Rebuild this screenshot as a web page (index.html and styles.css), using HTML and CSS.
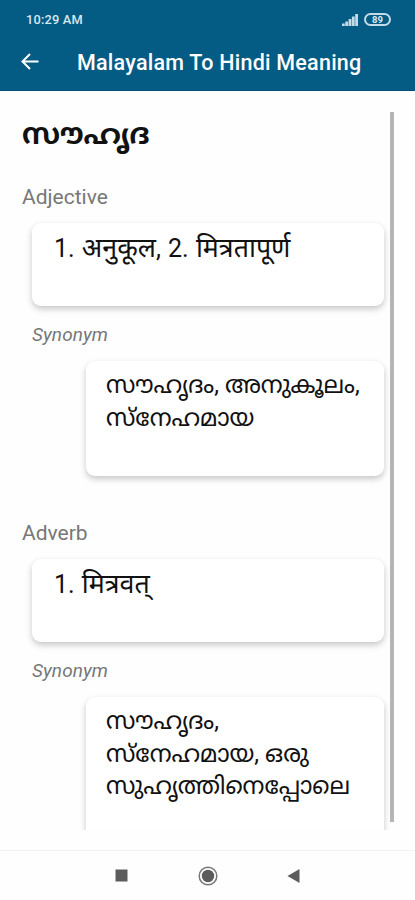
FILE: index.html
```
<!DOCTYPE html>
<html lang="ml">
<head>
  <meta charset="UTF-8">
  <meta name="viewport" content="width=device-width, initial-scale=1.0">
  <title>Malayalam To Hindi Meaning</title>
  <link rel="stylesheet" href="styles.css">
</head>
<body>

<header>
  <div class="status">
    <span class="time">10:29 AM</span>
    <svg class="signal" width="17" height="12" viewBox="0 0 17 12">
      <path d="M0 9.6h2.8V12H0zM3.3 7.4h2.8V12H3.3zM6.6 5h2.8v7H6.6zM9.9 2.6h2.8V12H9.9zM13.2 0H16v12h-2.8z"/>
    </svg>
    <span class="battery">89</span>
  </div>
  <div class="toolbar">
    <svg class="back" width="18" height="17" viewBox="0 0 18 17">
      <path d="M17.5 8.5H2M9 1L1.5 8.5 9 16"/>
    </svg>
    <h1>Malayalam To Hindi Meaning</h1>
  </div>
</header>

<main>
  <div class="content">
    <h2>സൗഹൃദ</h2>

    <section>
      <h3>Adjective</h3>
      <div class="card meaning" lang="hi">1. <span class="hi">अनुकूल</span>, 2. <span class="hi">मित्रतापूर्ण</span></div>
      <h4>Synonym</h4>
      <div class="card synonym">സൗഹൃദം, അനുകൂലം,<br>സ്&zwnj;നേഹമായ</div>
    </section>

    <section>
      <h3>Adverb</h3>
      <div class="card meaning" lang="hi">1. <span class="hi">मित्रवत्</span></div>
      <h4>Synonym</h4>
      <div class="card synonym">സൗഹൃദം,<br>സ്&zwnj;നേഹമായ, ഒരു<br>സുഹൃത്തിനെപ്പോലെ</div>
    </section>
  </div>
  <div class="scrollbar"></div>
</main>

<nav>
  <svg width="13" height="13" viewBox="0 0 13 13"><path d="M.5.5h12v12H.5z"/></svg>
  <svg width="20" height="20" viewBox="0 0 20 20">
    <circle class="ring" cx="10" cy="10" r="8.8"/>
    <circle cx="10" cy="10" r="6.2"/>
  </svg>
  <svg width="13" height="14" viewBox="0 0 13 14"><path d="M12.5 0v14L.5 7z"/></svg>
</nav>

</body>
</html>
```
FILE: styles.css
```
* {
  box-sizing: border-box;
}
body {
  margin: 0;
  height: 900px;
  overflow: hidden;
  display: flex;
  flex-direction: column;
  background-color: #fefefe;
  font-family: Roboto, "Noto Sans Malayalam", "Noto Sans", sans-serif;
  color: #111;
}
h1, h2, h3, h4 {
  margin: 0;
  white-space: nowrap;
}

header {
  height: 91px;
  background-color: #045b84;
  border-bottom: 1px solid #04507a;
  color: #fff;
}
.status {
  height: 39px;
  padding: 0 24px 0 26px;
  display: flex;
  align-items: center;
}
.time {
  flex: 1;
  font-size: 12.8px;
  font-weight: 500;
  letter-spacing: .2px;
  line-height: 14px;
  padding-top: 1px;
  color: #d8e8f0;
}
.signal {
  fill: #c3dbe6;
  margin-right: 5px;
}
.battery {
  width: 27px;
  height: 13px;
  border: 2px solid #c3dbe6;
  border-radius: 7px;
  font-size: 9.5px;
  font-weight: 700;
  line-height: 10px;
  text-align: center;
  color: #d8e8f0;
}
.toolbar {
  height: 46px;
  padding-left: 21px;
  display: flex;
  align-items: center;
}
.back {
  fill: none;
  stroke: #fff;
  stroke-width: 2;
  margin: 0 38px 2px 0;
}
h1 {
  font-size: 21.5px;
  font-weight: 500;
  letter-spacing: .24px;
}

main {
  height: 739px;
  padding: 20px 21px 0 0;
  display: flex;
}
.content {
  flex: 1;
  padding-left: 22px;
  padding-right: 6px;
  overflow: hidden;
}
.scrollbar {
  width: 4px;
  height: 710px;
  margin-top: 1px;
  background-color: #b5b5b5;
}
h2 {
  height: 70px;
  font-size: 28.5px;
  font-weight: 700;
  line-height: 47px;
}
h2, .synonym {
  font-feature-settings: "psts" 0, "blws" 0, "pres" 0;
}
h3 {
  height: 42px;
  font-size: 21px;
  font-weight: 400;
  line-height: 32px;
  color: #777;
}
h4 {
  height: 55px;
  padding-left: 10px;
  font-size: 19px;
  font-weight: 400;
  font-style: italic;
  letter-spacing: .1px;
  line-height: 58px;
  color: #777;
}
section {
  height: 336px;
}
.card {
  border-radius: 9px;
  background-color: #fff;
  box-shadow: 0 3px 6px rgba(0, 0, 0, .22);
  white-space: nowrap;
}
.meaning {
  height: 83px;
  margin-left: 10px;
  padding: 8px 0 0 22px;
  font-size: 25px;
  line-height: 34px;
  word-spacing: 1px;
}
.hi {
  font-size: 26.8px;
}
.synonym {
  height: 115px;
  margin-left: 64px;
  padding: 8px 0 0 20px;
  font-size: 24px;
  line-height: 32.5px;
}
section:last-child .synonym {
  height: 148px;
}

nav {
  height: 50px;
  margin-top: 20px;
  border-top: 1px solid #f3f3f3;
  padding: 0 115px;
  display: flex;
  justify-content: space-between;
  align-items: center;
  fill: #5c5c5c;
}
.ring {
  fill: none;
  stroke: #777;
  stroke-width: 1.5;
}
```
